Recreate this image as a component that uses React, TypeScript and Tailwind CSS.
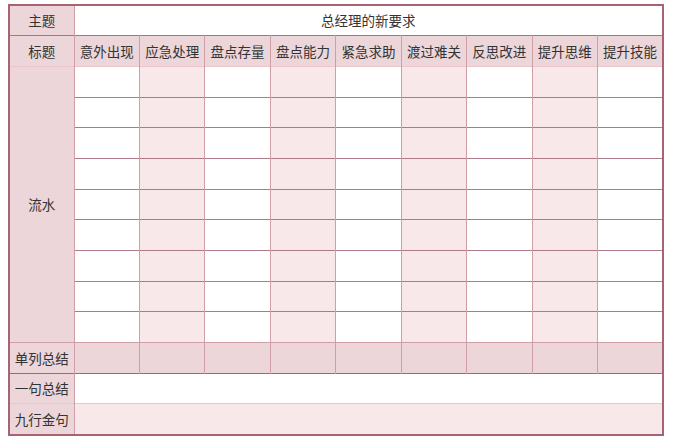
import React from "react";

const heads = ["意外出现", "应急处理", "盘点存量", "盘点能力", "紧急求助", "渡过难关", "反思改进", "提升思维", "提升技能"];

export default function App() {
  const rows = Array.from({ length: 9 });
  return (
    <div className="w-[676px] h-[447px] bg-white pl-[8px] pt-[4px] text-[#333] text-[13.5px]" style={{ fontFamily: '"Noto Sans CJK SC", "Noto Sans", sans-serif' }}>
      <table className="w-[656px] table-fixed border-collapse border-2 border-[#a86372]">
        <tbody>
          <tr className="h-[30.7px]">
            <td className="w-[65px] bg-[#ecd6d9] text-center border-r border-[#cf9ea7]">主题</td>
            <td colSpan={9} className="bg-white text-center">总经理的新要求</td>
          </tr>
          <tr className="h-[30.7px] bg-[#ecd6d9] border-t border-[#b0707e]">
            <td className="text-center border-r border-[#cf9ea7]">标题</td>
            {heads.map((h) => (
              <td key={h} className="text-center border-r border-[#cf9ea7]">{h}</td>
            ))}
          </tr>
          {rows.map((_, i) => (
            <tr key={i} className={"h-[30.7px] " + (i === 0 ? "border-t border-[#ecc4ca]" : "border-t border-[#ae7a86]")}>
              {i === 0 && (
                <td rowSpan={9} className="bg-[#ecd6d9] text-center border-r border-[#cf9ea7]">流水</td>
              )}
              {heads.map((h, j) => (
                <td key={h} className={"border-r border-[#cf9ea7] " + (j % 2 === 1 ? "bg-[#f8e8ea]" : "bg-white")}></td>
              ))}
            </tr>
          ))}
          <tr className="h-[30.7px] bg-[#ecd6d9] border-t border-[#cf9ea7]">
            <td className="text-center border-r border-[#cf9ea7]">单列总结</td>
            {heads.map((h) => (
              <td key={h} className="border-r border-[#cf9ea7]"></td>
            ))}
          </tr>
          <tr className="h-[30.7px] border-t border-[#a86372]">
            <td className="bg-[#ecd6d9] text-center border-r border-[#cf9ea7]">一句总结</td>
            <td colSpan={9} className="bg-white"></td>
          </tr>
          <tr className="h-[30.7px] border-t border-[#ecc4ca]">
            <td className="bg-[#ecd6d9] text-center border-r border-[#cf9ea7]">九行金句</td>
            <td colSpan={9} className="bg-[#f8e8ea]"></td>
          </tr>
        </tbody>
      </table>
    </div>
  );
}
